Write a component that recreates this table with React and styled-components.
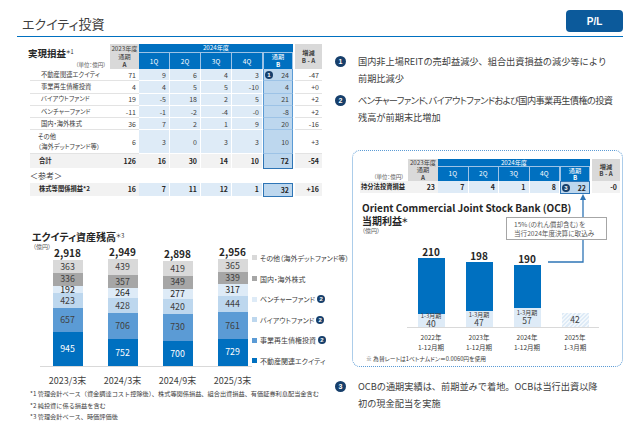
import React from "react";
import styled, { createGlobalStyle } from "styled-components";

const GlobalStyle = createGlobalStyle`
  body {
    margin: 0;
    background: #fff;
  }
  * {
    box-sizing: border-box;
  }
`;

const Page = styled.div`
  width: 640px;
  height: 443px;
  padding: 0 17px;
  overflow: hidden;
  background: #fff;
  color: #404040;
  font-family: "Noto Sans CJK JP", "Noto Sans", sans-serif;
  font-feature-settings: "palt";
`;

const Header = styled.header`
  height: 36.5px;
  display: flex;
  justify-content: space-between;
  align-items: flex-start;
  border-bottom: 1.5px solid #0070c0;
`;

const PageTitle = styled.h1`
  margin: 15px 0 0 5px;
  font-size: 13px;
  font-weight: 400;
  line-height: 18px;
  color: #404040;
`;

const Badge = styled.div`
  margin-top: 10px;
  width: 57px;
  height: 22px;
  border-radius: 4px;
  background: #0c5a9b;
  color: #fff;
  font: bold 10px "Liberation Sans", sans-serif;
  display: flex;
  align-items: center;
  justify-content: center;
`;

const Body = styled.div`
  display: grid;
  grid-template-columns: 313px 293px;
`;

const LeftCol = styled.div`
  display: flex;
  flex-direction: column;
  padding-top: 7.5px;
`;

const RightCol = styled.div`
  display: flex;
  flex-direction: column;
`;

/* ---------- tables ---------- */

const TableWrap = styled.div`
  margin-left: ${(p) => p.$indent}px;
`;

const HeadGrid = styled.div`
  display: grid;
  grid-template-columns: ${(p) => p.$cols};
  grid-template-rows: ${(p) => p.$rows};
  color: #fff;
  font-size: 6.2px;
  line-height: ${(p) => p.$lh}px;
  text-align: center;
`;

const HeadLabel = styled.div`
  grid-row: 1 / span 2;
  display: flex;
  flex-direction: column;
  justify-content: space-between;
  color: #404040;
`;

const SectionTitle = styled.div`
  margin: 3px 0 0 -2px;
  font-size: 9.5px;
  line-height: 11px;
  font-weight: 700;
  color: #262626;
  text-align: left;

  sup {
    font-size: 5.5px;
    font-weight: 400;
    vertical-align: 3px;
  }
`;

const Unit = styled.div`
  font-size: 5.5px;
  line-height: 8px;
  text-align: right;
  padding-right: 4px;
  color: #595959;
`;

const GrayHead = styled.div`
  grid-row: 1 / span 2;
  background: #d9d9d9;
  color: #404040;
  display: flex;
  flex-direction: column;
  justify-content: center;
  margin-left: ${(p) => (p.$gap ? 2 : 0)}px;

  b {
    font-weight: 700;
  }
`;

const YearHead = styled.div`
  grid-column: 3 / span 5;
  background: #0070c0;
  display: flex;
  align-items: center;
  justify-content: center;
`;

const QHead = styled.div`
  background: #0070c0;
  border-top: 1px solid #9dc3e6;
  border-right: 1px solid #9dc3e6;
  display: flex;
  align-items: center;
  justify-content: center;
  font-size: 6.5px;
`;

const BHead = styled.div`
  background: #0070c0;
  border: 1px solid #9dc3e6;
  border-bottom: none;
  display: flex;
  flex-direction: column;
  align-items: center;
  justify-content: center;

  b {
    font-weight: 700;
  }
`;

const Row = styled.div`
  display: grid;
  grid-template-columns: ${(p) => p.$cols};
  height: ${(p) => p.$h}px;
  font-weight: ${(p) => (p.$bold ? 700 : 400)};
  color: ${(p) => (p.$bold ? "#262626" : "#404040")};
`;

const LabelCell = styled.div`
  display: flex;
  flex-direction: column;
  justify-content: center;
  padding-left: ${(p) => p.$pad}px;
  font-size: 6.3px;
  line-height: 10px;
  white-space: nowrap;
  background: ${(p) => p.$bg};
  border-bottom: 1px solid ${(p) => (p.$bg === "transparent" ? "#e3e3e3" : "#fff")};
`;

const NumCell = styled.div`
  display: flex;
  align-items: center;
  justify-content: ${(p) => (p.$mark ? "space-between" : "flex-end")};
  padding: 0 3px 0 ${(p) => (p.$mark ? 1 : 0)}px;
  font-size: 7px;
  background: ${(p) => p.$bg};
  border-bottom: 1px solid ${(p) => (p.$bg === "transparent" ? "#e3e3e3" : "#fff")};
  border-right: ${(p) => (p.$sep ? "1px solid #fff" : "none")};
  margin-left: ${(p) => (p.$gap ? 2 : 0)}px;
`;

const BCell = styled(NumCell)`
  border-left: 1.5px solid ${(p) => p.$line};
  border-right: 1.5px solid ${(p) => p.$line};
  border-bottom: ${(p) => (p.$closed ? `1.5px solid ${p.$line}` : "1px solid #9dc3e6")};
  border-top: ${(p) => (p.$boxed ? `1.5px solid ${p.$line}` : "none")};
`;

const NumCircle = styled.span`
  width: ${(p) => p.$size}px;
  height: ${(p) => p.$size}px;
  border-radius: 50%;
  background: #173f6b;
  color: #fff;
  font: bold ${(p) => Math.round(p.$size * 0.72)}px "Liberation Sans", sans-serif;
  display: inline-flex;
  align-items: center;
  justify-content: center;
  flex-shrink: 0;
`;

const RefNote = styled.div`
  height: 14px;
  font-size: 8px;
  line-height: 14px;
  color: #404040;
`;

const tones = {
  normal: { label: "transparent", a: "transparent", q: "#deebf7", diff: "transparent" },
  total: { label: "#f2f2f2", a: "#f2f2f2", q: "#f2f2f2", diff: "#f2f2f2" },
  ref: { label: "#f2f2f2", a: "#f2f2f2", q: "#deebf7", diff: "#f2f2f2" },
};

const TableRow = ({ cols, h, data, variant = "normal", pad, closed, boxed }) => {
  const t = tones[variant];
  const bold = variant !== "normal";
  return (
    <Row $cols={cols} $h={h} $bold={bold}>
      <LabelCell $pad={pad} $bg={t.label}>
        {data.label.map((l) => (
          <span key={l}>{l}</span>
        ))}
      </LabelCell>
      <NumCell $bg={t.a}>{data.a}</NumCell>
      {data.q.map((v, i) => (
        <NumCell key={i} $bg={t.q} $sep>
          {v}
        </NumCell>
      ))}
      <BCell
        $bg="#bdd7ee"
        $mark={!!data.mark}
        $line={boxed || closed ? "#2e75b6" : "#5b9bd5"}
        $closed={closed || boxed}
        $boxed={boxed}
      >
        {data.mark && <NumCircle $size={8}>{data.mark}</NumCircle>}
        {data.b}
      </BCell>
      <NumCell $bg={t.diff} $gap>
        {data.d}
      </NumCell>
    </Row>
  );
};

const mainCols = "80px 29px repeat(4, 31px) 30px 29px";

const realRows = [
  { label: ["不動産関連エクイティ"], a: "71", q: ["9", "6", "4", "3"], b: "24", d: "-47", mark: 1 },
  { label: ["事業再生債権投資"], a: "4", q: ["4", "5", "5", "-10"], b: "4", d: "+0" },
  { label: ["バイアウトファンド"], a: "19", q: ["-5", "18", "2", "5"], b: "21", d: "+2" },
  { label: ["ベンチャーファンド"], a: "-11", q: ["-1", "-2", "-4", "-0"], b: "-8", d: "+2" },
  { label: ["国内・海外株式"], a: "36", q: ["7", "2", "1", "9"], b: "20", d: "-16" },
];

const otherRow = {
  label: ["その他", "（海外デットファンド等）"],
  a: "6",
  q: ["3", "0", "3", "3"],
  b: "10",
  d: "+3",
};
const totalRow = { label: ["合計"], a: "126", q: ["16", "30", "14", "10"], b: "72", d: "-54" };
const refRow = {
  label: ["株式等関係損益*2"],
  a: "16",
  q: ["7", "11", "12", "1"],
  b: "32",
  d: "+16",
};

const TableHead = ({ cols, rows, lh, title }) => (
  <HeadGrid $cols={cols} $rows={rows} $lh={lh}>
    <HeadLabel>
      {title ? (
        <SectionTitle>
          実現損益<sup>＊1</sup>
        </SectionTitle>
      ) : (
        <span />
      )}
      <Unit>（単位：億円）</Unit>
    </HeadLabel>
    <GrayHead>
      <span>2023年度</span>
      <span>通期</span>
      <b>A</b>
    </GrayHead>
    <YearHead>2024年度</YearHead>
    <GrayHead $gap style={{ gridColumn: 8 }}>
      <b>増減</b>
      <b>B - A</b>
    </GrayHead>
    {["1Q", "2Q", "3Q", "4Q"].map((q) => (
      <QHead key={q}>{q}</QHead>
    ))}
    <BHead>
      <span>通期</span>
      <b>B</b>
    </BHead>
  </HeadGrid>
);

/* ---------- equity balance chart ---------- */

const ChartTitle = styled.div`
  margin: 33px 0 0 15px;
  font-size: 10px;
  line-height: 12px;
  font-weight: 700;
  color: #262626;

  sup {
    font-size: 6px;
    font-weight: 400;
    vertical-align: 3px;
  }
`;

const SmallUnit = styled.div`
  margin-left: ${(p) => p.$indent}px;
  font-size: 6px;
  line-height: 8px;
  color: #595959;
`;

const ChartRow = styled.div`
  display: flex;
  height: 116px;
`;

const BarArea = styled.div`
  margin-left: 23px;
  width: 212px;
  display: flex;
  align-items: flex-end;
  border-bottom: 1px solid #d9d9d9;
`;

const BarCol = styled.div`
  width: ${(p) => p.$w}px;
  flex-shrink: 0;
  display: flex;
  flex-direction: column;
  align-items: center;
  justify-content: flex-end;
`;

const BarTotal = styled.div`
  font-size: ${(p) => p.$size}px;
  line-height: ${(p) => p.$size + 1}px;
  font-weight: 700;
  color: #262626;
  margin-bottom: ${(p) => p.$gap}px;
`;

const Stack = styled.div`
  width: 30px;
  display: flex;
  flex-direction: column-reverse;
`;

const Segment = styled.div`
  height: ${(p) => p.$h}px;
  line-height: ${(p) => p.$h}px;
  background: ${(p) => p.$bg};
  color: ${(p) => p.$fg};
  font-size: 8.8px;
  text-align: center;
  overflow: visible;
  white-space: nowrap;
`;

const Legend = styled.ul`
  margin: 2px 0 0 0;
  padding: 0;
  list-style: none;
  height: 113px;
  display: flex;
  flex-direction: column;
  justify-content: space-between;
`;

const LegendItem = styled.li`
  height: 10px;
  display: flex;
  align-items: center;
  gap: 2px;
  font-size: 7px;
  white-space: nowrap;
  color: #404040;

  &::before {
    content: "";
    width: 5px;
    height: 5px;
    margin-right: 1px;
    background: ${(p) => p.$color};
  }
`;

const AxisLabels = styled.div`
  display: flex;
  margin: 8px 0 0 23px;
`;

const AxisLabel = styled.div`
  width: ${(p) => p.$w}px;
  text-align: center;
  font-size: ${(p) => p.$size}px;
  line-height: ${(p) => p.$lh}px;
  color: #404040;
  white-space: nowrap;
`;

const Notes = styled.div`
  margin: 2.5px 0 0 13px;
  font-size: 6.2px;
  line-height: 11.5px;
  color: #404040;
  white-space: nowrap;
  font-feature-settings: normal;
`;

const segColors = [
  { bg: "#0070c0", fg: "#fff" },
  { bg: "#5b9bd5", fg: "#404040" },
  { bg: "#bdd7ee", fg: "#404040" },
  { bg: "#deebf7", fg: "#262626" },
  { bg: "#a6a6a6", fg: "#404040" },
  { bg: "#d9d9d9", fg: "#404040" },
];

const assets = [
  { label: "2023/3末", total: "2,918", segs: [945, 657, 423, 192, 336, 363] },
  { label: "2024/3末", total: "2,949", segs: [752, 706, 428, 264, 357, 439] },
  { label: "2024/9末", total: "2,898", segs: [700, 730, 420, 277, 349, 419] },
  { label: "2025/3末", total: "2,956", segs: [729, 761, 444, 317, 339, 365] },
];

const legend = [
  { text: "その他（海外デットファンド等）", color: "#d9d9d9" },
  { text: "国内・海外株式", color: "#a6a6a6" },
  { text: "ベンチャーファンド", color: "#deebf7", mark: 2 },
  { text: "バイアウトファンド", color: "#bdd7ee", mark: 2 },
  { text: "事業再生債権投資", color: "#5b9bd5", mark: 2 },
  { text: "不動産関連エクイティ", color: "#0070c0" },
];

/* ---------- right side ---------- */

const Bullets = styled.ol`
  margin: ${(p) => p.$top}px 0 0 0;
  padding: 0 0 0 5px;
  list-style: none;
  display: flex;
  flex-direction: column;
  gap: 5px;
`;

const Bullet = styled.li`
  display: flex;
  gap: 12px;
  font-size: 9.2px;
  line-height: 17px;
  color: #404040;
  white-space: nowrap;
  font-feature-settings: normal;

  ${NumCircle} {
    margin-top: 3px;
    width: 11px;
    height: 11px;
  }
`;

const KanaLine = styled.span`
  font-feature-settings: "palt";
  letter-spacing: -0.6px;
`;

const Panel = styled.section`
  position: relative;
  margin: 24.5px 0 0 22px;
  width: 271px;
  height: 217px;
  padding: 8px 0 0 7px;
  border: 1px dotted #5b9bd5;
  border-radius: 8px;
`;

const OcbTitle = styled.div`
  margin: 6.5px 0 0 2px;
  font-size: 10px;
  line-height: 13px;
  font-weight: 700;
  color: #262626;
  white-space: nowrap;

  sup {
    font-size: 7px;
    vertical-align: 2px;
  }
`;

const OcbChart = styled.div`
  margin-left: 47px;
  width: 192px;
  height: 93px;
  display: flex;
  align-items: flex-end;
  border-bottom: 1px solid #d9d9d9;
`;

const OcbBar = styled.div`
  width: 27px;
  display: flex;
  flex-direction: column;
`;

const OcbMain = styled.div`
  height: ${(p) => p.$h}px;
  background: #0070c0;
`;

const OcbSub = styled.div`
  height: ${(p) => p.$h}px;
  background: ${(p) =>
    p.$hatched
      ? "repeating-linear-gradient(135deg, #deebf7 0 1.5px, #f3f8fc 1.5px 3px)"
      : "#deebf7"};
  display: flex;
  flex-direction: column;
  justify-content: center;
  align-items: center;
  color: #404040;
  white-space: nowrap;

  small {
    font-size: 6px;
    line-height: 7px;
  }
  span {
    font-size: 8.5px;
    line-height: 9.5px;
  }
`;

const OcbAxis = styled.div`
  display: flex;
  margin: 4px 0 0 47px;
`;

const PanelNote = styled.div`
  margin: 3px 0 0 6px;
  font-size: 5.8px;
  line-height: 8px;
  color: #404040;
  white-space: nowrap;
`;

const Callout = styled.div`
  position: absolute;
  left: 153px;
  top: 66px;
  width: 101px;
  height: 23px;
  padding: 2px 0 0 7px;
  border: 1px solid #a6a6a6;
  background: #fff;
  font-size: 6.6px;
  line-height: 9px;
  color: #595959;
  white-space: nowrap;
`;

const Connector = styled.svg`
  position: absolute;
  left: 0;
  top: 0;
  overflow: visible;
  pointer-events: none;
`;

const ocbCols = "48px 30px repeat(4, 30.5px) 30px 30px";
const ocbRow = {
  label: ["持分法投資損益"],
  a: "23",
  q: ["7", "4", "1", "8"],
  b: "22",
  d: "-0",
  mark: 3,
};

const OCB_SCALE = 0.324;
const ocbBars = [
  { total: "210", main: 170, sub: 40, l1: "2022年", l2: "1-12月期" },
  { total: "198", main: 151, sub: 47, l1: "2023年", l2: "1-12月期" },
  { total: "190", main: 133, sub: 57, l1: "2024年", l2: "1-12月期" },
  { total: null, main: 0, sub: 42, hatched: true, l1: "2025年", l2: "1-3月期" },
];

const ASSET_SCALE = 0.0363;

export default function App() {
  return (
    <Page>
      <GlobalStyle />
      <Header>
        <PageTitle>エクイティ投資</PageTitle>
        <Badge>P/L</Badge>
      </Header>

      <Body>
        <LeftCol>
          <TableWrap $indent={13}>
            <TableHead cols={mainCols} rows="8px 17px" lh={8} title />
            {realRows.map((r) => (
              <TableRow key={r.label[0]} cols={mainCols} h={12.3} data={r} pad={11} />
            ))}
            <TableRow cols={mainCols} h={24} data={otherRow} pad={8} />
            <TableRow cols={mainCols} h={14.5} data={totalRow} variant="total" pad={9} closed />
            <RefNote>＜参考＞</RefNote>
            <TableRow cols={mainCols} h={14} data={refRow} variant="ref" pad={9} boxed />
          </TableWrap>

          <ChartTitle>
            エクイティ資産残高<sup>＊3</sup>
          </ChartTitle>
          <SmallUnit $indent={16}>（億円）</SmallUnit>
          <ChartRow>
            <BarArea>
              {assets.map((a) => (
                <BarCol key={a.label} $w={55}>
                  <BarTotal $size={10} $gap={2}>
                    {a.total}
                  </BarTotal>
                  <Stack>
                    {a.segs.map((v, i) => (
                      <Segment
                        key={i}
                        $h={+(v * ASSET_SCALE).toFixed(1)}
                        $bg={segColors[i].bg}
                        $fg={segColors[i].fg}
                      >
                        {v}
                      </Segment>
                    ))}
                  </Stack>
                </BarCol>
              ))}
            </BarArea>
            <Legend>
              {legend.map((l) => (
                <LegendItem key={l.text} $color={l.color}>
                  {l.text}
                  {l.mark && <NumCircle $size={8}>{l.mark}</NumCircle>}
                </LegendItem>
              ))}
            </Legend>
          </ChartRow>
          <AxisLabels>
            {assets.map((a) => (
              <AxisLabel key={a.label} $w={55} $size={9} $lh={11}>
                {a.label}
              </AxisLabel>
            ))}
          </AxisLabels>
          <Notes>
            <div>*1 管理会計ベース（資金調達コスト控除後）、株式等関係損益、組合出資損益、有価証券利息配当金含む</div>
            <div>*2 純投資に係る損益を含む</div>
            <div>*3 管理会計ベース、時価評価後</div>
          </Notes>
        </LeftCol>

        <RightCol>
          <Bullets $top={16}>
            <Bullet>
              <NumCircle $size={10}>1</NumCircle>
              <div>
                国内非上場REITの売却益減少、組合出資損益の減少等により
                <br />
                前期比減少
              </div>
            </Bullet>
            <Bullet>
              <NumCircle $size={10}>2</NumCircle>
              <div>
                <KanaLine>ベンチャーファンド、バイアウトファンドおよび国内事業再生債権の投資</KanaLine>
                <br />
                残高が前期末比増加
              </div>
            </Bullet>
          </Bullets>

          <Panel>
            <TableHead cols={ocbCols} rows="7px 15px" lh={7.3} />
            <TableRow cols={ocbCols} h={13} data={ocbRow} variant="ref" pad={1} boxed />
            <OcbTitle>
              Orient Commercial Joint Stock Bank (OCB)
              <br />
              当期利益<sup>＊</sup>
            </OcbTitle>
            <SmallUnit $indent={2}>（億円）</SmallUnit>
            <OcbChart>
              {ocbBars.map((b) => (
                <BarCol key={b.l1} $w={48}>
                  {b.total && (
                    <BarTotal $size={10} $gap={1}>
                      {b.total}
                    </BarTotal>
                  )}
                  <OcbBar>
                    {b.main > 0 && <OcbMain $h={b.main * OCB_SCALE} />}
                    <OcbSub $h={b.sub * OCB_SCALE} $hatched={b.hatched}>
                      {!b.hatched && <small>1-3月期</small>}
                      <span>{b.sub}</span>
                    </OcbSub>
                  </OcbBar>
                </BarCol>
              ))}
            </OcbChart>
            <OcbAxis>
              {ocbBars.map((b) => (
                <AxisLabel key={b.l1} $w={48} $size={6.5} $lh={10}>
                  {b.l1}
                  <br />
                  {b.l2}
                </AxisLabel>
              ))}
            </OcbAxis>
            <PanelNote>※ 為替レートは1ベトナムドン＝0.0060円を使用</PanelNote>

            <Connector width="271" height="217">
              <path d="M230 47 V111 H195" fill="none" stroke="#2e75b6" strokeWidth="1.3" />
              <polygon points="230,43 227,49 233,49" fill="#2e75b6" />
            </Connector>
            <Callout>
              15%（のれん償却含む）を
              <br />
              当行2024年度決算に取込み
            </Callout>
          </Panel>

          <Bullets $top={10.5}>
            <Bullet>
              <NumCircle $size={10}>3</NumCircle>
              <div>
                OCBの通期実績は、前期並みで着地。OCBは当行出資以降
                <br />
                初の現金配当を実施
              </div>
            </Bullet>
          </Bullets>
        </RightCol>
      </Body>
    </Page>
  );
}
